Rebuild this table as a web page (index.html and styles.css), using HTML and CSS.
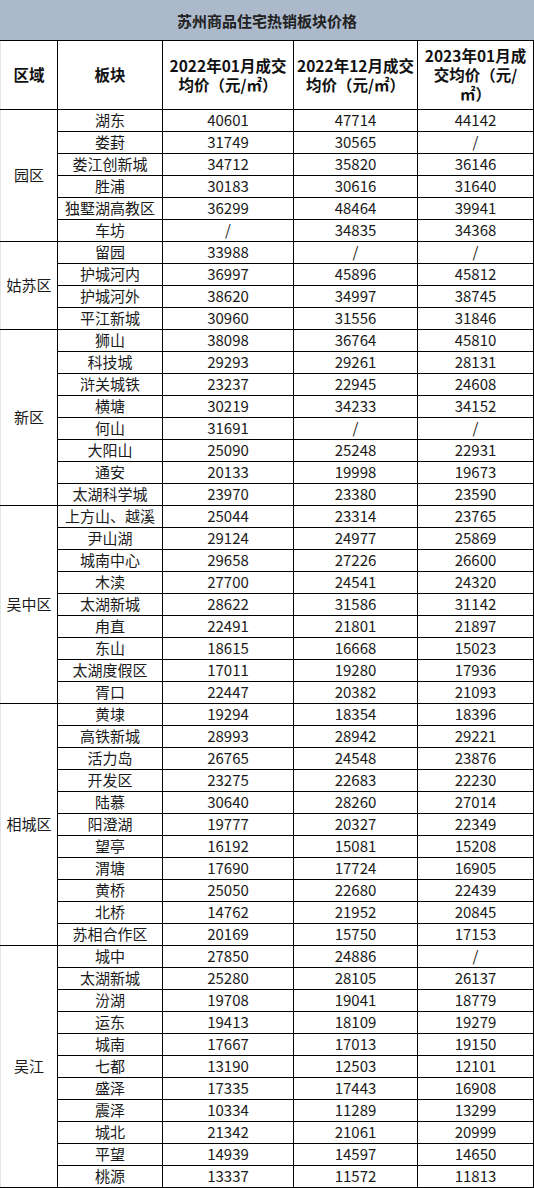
FILE: index.html
```html
<!DOCTYPE html>
<html lang="zh-CN">
<head>
<meta charset="utf-8">
<title>苏州商品住宅热销板块价格</title>
<link rel="stylesheet" href="styles.css">
</head>
<body>
<div class="sheet">
  <div class="title">苏州商品住宅热销板块价格</div>
  <table class="grid">
    <colgroup>
      <col class="c-region">
      <col class="c-block">
      <col class="c-p1">
      <col class="c-p2">
      <col class="c-p3">
    </colgroup>
    <thead>
      <tr class="head">
        <th class="region">区域</th>
        <th>板块</th>
        <th>2022年01月成交均价（元/㎡）</th>
        <th>2022年12月成交均价（元/㎡）</th>
        <th class="narrow">2023年01月成<wbr>交均价（元/<wbr>㎡）</th>
      </tr>
    </thead>
    <tbody>
      <tr><td class="region" rowspan="6">园区</td><td>湖东</td><td>40601</td><td>47714</td><td>44142</td></tr>
      <tr><td>娄葑</td><td>31749</td><td>30565</td><td>/</td></tr>
      <tr><td>娄江创新城</td><td>34712</td><td>35820</td><td>36146</td></tr>
      <tr><td>胜浦</td><td>30183</td><td>30616</td><td>31640</td></tr>
      <tr><td>独墅湖高教区</td><td>36299</td><td>48464</td><td>39941</td></tr>
      <tr><td>车坊</td><td>/</td><td>34835</td><td>34368</td></tr>

      <tr><td class="region" rowspan="4">姑苏区</td><td>留园</td><td>33988</td><td>/</td><td>/</td></tr>
      <tr><td>护城河内</td><td>36997</td><td>45896</td><td>45812</td></tr>
      <tr><td>护城河外</td><td>38620</td><td>34997</td><td>38745</td></tr>
      <tr><td>平江新城</td><td>30960</td><td>31556</td><td>31846</td></tr>

      <tr><td class="region" rowspan="8">新区</td><td>狮山</td><td>38098</td><td>36764</td><td>45810</td></tr>
      <tr><td>科技城</td><td>29293</td><td>29261</td><td>28131</td></tr>
      <tr><td>浒关城铁</td><td>23237</td><td>22945</td><td>24608</td></tr>
      <tr><td>横塘</td><td>30219</td><td>34233</td><td>34152</td></tr>
      <tr><td>何山</td><td>31691</td><td>/</td><td>/</td></tr>
      <tr><td>大阳山</td><td>25090</td><td>25248</td><td>22931</td></tr>
      <tr><td>通安</td><td>20133</td><td>19998</td><td>19673</td></tr>
      <tr><td>太湖科学城</td><td>23970</td><td>23380</td><td>23590</td></tr>

      <tr><td class="region" rowspan="9">吴中区</td><td>上方山、越溪</td><td>25044</td><td>23314</td><td>23765</td></tr>
      <tr><td>尹山湖</td><td>29124</td><td>24977</td><td>25869</td></tr>
      <tr><td>城南中心</td><td>29658</td><td>27226</td><td>26600</td></tr>
      <tr><td>木渎</td><td>27700</td><td>24541</td><td>24320</td></tr>
      <tr><td>太湖新城</td><td>28622</td><td>31586</td><td>31142</td></tr>
      <tr><td>甪直</td><td>22491</td><td>21801</td><td>21897</td></tr>
      <tr><td>东山</td><td>18615</td><td>16668</td><td>15023</td></tr>
      <tr><td>太湖度假区</td><td>17011</td><td>19280</td><td>17936</td></tr>
      <tr><td>胥口</td><td>22447</td><td>20382</td><td>21093</td></tr>

      <tr><td class="region" rowspan="11">相城区</td><td>黄埭</td><td>19294</td><td>18354</td><td>18396</td></tr>
      <tr><td>高铁新城</td><td>28993</td><td>28942</td><td>29221</td></tr>
      <tr><td>活力岛</td><td>26765</td><td>24548</td><td>23876</td></tr>
      <tr><td>开发区</td><td>23275</td><td>22683</td><td>22230</td></tr>
      <tr><td>陆慕</td><td>30640</td><td>28260</td><td>27014</td></tr>
      <tr><td>阳澄湖</td><td>19777</td><td>20327</td><td>22349</td></tr>
      <tr><td>望亭</td><td>16192</td><td>15081</td><td>15208</td></tr>
      <tr><td>渭塘</td><td>17690</td><td>17724</td><td>16905</td></tr>
      <tr><td>黄桥</td><td>25050</td><td>22680</td><td>22439</td></tr>
      <tr><td>北桥</td><td>14762</td><td>21952</td><td>20845</td></tr>
      <tr><td>苏相合作区</td><td>20169</td><td>15750</td><td>17153</td></tr>

      <tr><td class="region" rowspan="11">吴江</td><td>城中</td><td>27850</td><td>24886</td><td>/</td></tr>
      <tr><td>太湖新城</td><td>25280</td><td>28105</td><td>26137</td></tr>
      <tr><td>汾湖</td><td>19708</td><td>19041</td><td>18779</td></tr>
      <tr><td>运东</td><td>19413</td><td>18109</td><td>19279</td></tr>
      <tr><td>城南</td><td>17667</td><td>17013</td><td>19150</td></tr>
      <tr><td>七都</td><td>13190</td><td>12503</td><td>12101</td></tr>
      <tr><td>盛泽</td><td>17335</td><td>17443</td><td>16908</td></tr>
      <tr><td>震泽</td><td>10334</td><td>11289</td><td>13299</td></tr>
      <tr><td>城北</td><td>21342</td><td>21061</td><td>20999</td></tr>
      <tr><td>平望</td><td>14939</td><td>14597</td><td>14650</td></tr>
      <tr><td>桃源</td><td>13337</td><td>11572</td><td>11813</td></tr>
    </tbody>
  </table>
</div>
</body>
</html>
```

FILE: styles.css
```css
html, body {
  margin: 0;
  padding: 0;
  background: #ffffff;
}

body {
  font-family: "Noto Sans CJK SC", "Noto Sans", sans-serif;
  color: #1a1a1a;
}

.sheet {
  width: 534px;
}

.title {
  box-sizing: border-box;
  height: 41px;
  background: #acb9ca;
  border-bottom: 1px solid #000;
  display: flex;
  align-items: center;
  justify-content: center;
  font-size: 15px;
  font-weight: bold;
  color: #222;
}

.grid {
  width: 533px;
  border-collapse: collapse;
  table-layout: fixed;
}

.c-region { width: 57px; }
.c-block  { width: 105px; }
.c-p1     { width: 131px; }
.c-p2     { width: 124px; }
.c-p3     { width: 116px; }

.grid th,
.grid td {
  border: 1px solid #000;
  text-align: center;
  vertical-align: middle;
  white-space: normal;
}

.grid th {
  padding: 0 2px;
  font-size: 15.5px;
  font-weight: bold;
  color: #111;
  line-height: 19px;
}

.grid th.narrow {
  padding: 0 3px;
  line-break: strict;
}

.grid td {
  padding: 0 4px;
  font-size: 15px;
  line-height: 20px;
  font-weight: normal;
}

.grid .region {
  border-left: 1px solid #e4e4e4;
  padding: 0;
}

.grid thead th {
  border-top: none;
}

.head {
  height: 68px;
}

.grid tbody tr {
  height: 22px;
}
```
